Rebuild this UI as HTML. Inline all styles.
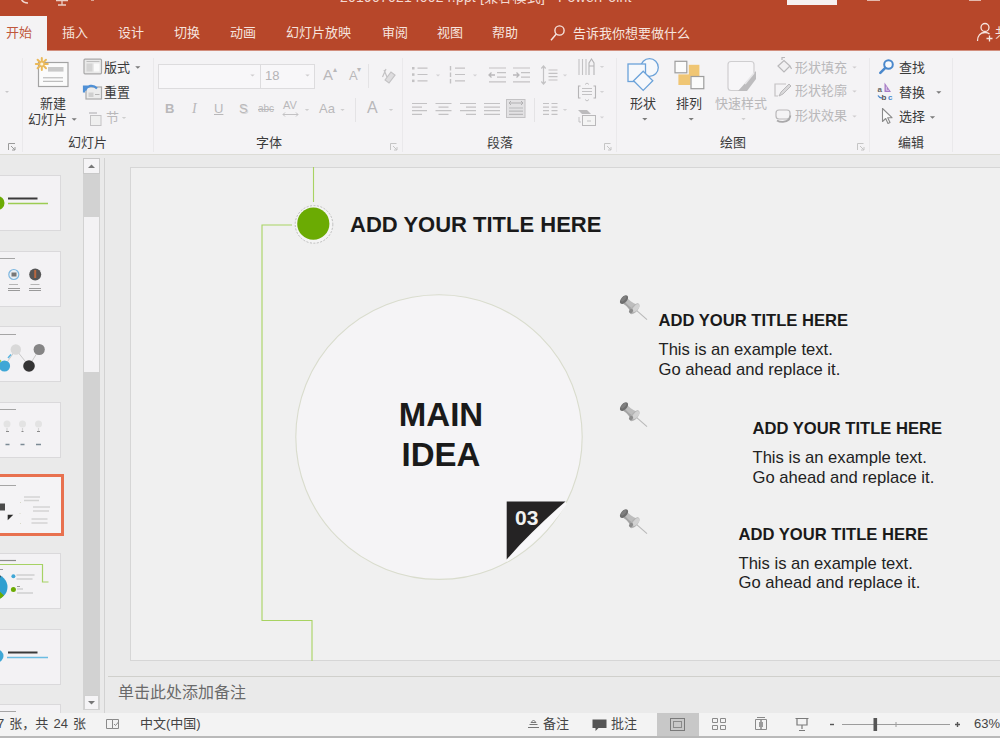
<!DOCTYPE html>
<html lang="zh-CN">
<head>
<meta charset="utf-8">
<title>PowerPoint</title>
<style>
*{box-sizing:border-box;margin:0;padding:0}
html,body{width:1000px;height:738px;overflow:hidden;background:#e6e6e6}
body{position:relative;font-family:"Liberation Sans","Noto Sans CJK SC",sans-serif;font-size:13px;color:#333}
.abs{position:absolute}
#titlebar{position:absolute;left:0;top:0;width:1000px;height:50px;background:#b7472a;overflow:hidden}
#titletext{position:absolute;left:340px;top:-14px;font-size:14px;color:#f3d9d2;white-space:nowrap;letter-spacing:.2px}
.tab{position:absolute;top:23px;height:20px;line-height:20px;color:#f6e4df;font-size:13px;white-space:nowrap}
#tab-home{position:absolute;left:0;top:16px;width:47px;height:34px;background:#f4f3f5}
#tab-home span{position:absolute;left:6px;top:7px;line-height:20px;color:#c0573c;font-size:13px}
#ribbon{position:absolute;left:0;top:50px;width:1000px;height:105px;background:#f4f3f5;border-bottom:1px solid #dcdcd6;overflow:hidden}
#ribbon:before{content:"";position:absolute;left:47px;top:0;width:953px;height:1px;background:#d28f7e}
.gsep{position:absolute;top:8px;width:1px;height:94px;background:#eae9eb}
.glabel{position:absolute;top:84px;font-size:13px;line-height:18px;color:#3b3b3b;white-space:nowrap}
.rt{position:absolute;font-size:13px;line-height:16px;color:#3a3a3a;white-space:nowrap}
.dim{color:#b9b8ba}
.arrow{position:absolute;width:0;height:0;border-left:3px solid transparent;border-right:3px solid transparent;border-top:3px solid #777}
.arrow.l{border-top-color:#c4c3c5}
#work{position:absolute;left:0;top:155px;width:1000px;height:558px;background:#eaeaea;overflow:hidden}
#slide{position:absolute;left:130px;top:12px;width:900px;height:494px;background:#f0f0f0;border:1px solid #d6d6d6}
#status{position:absolute;left:0;top:713px;width:1000px;height:25px;background:#f3f3f3;border-bottom:2px solid #b9b9b9;overflow:hidden}
.st{position:absolute;top:3px;font-size:13px;line-height:16px;color:#444;white-space:nowrap}
.thumb{position:absolute;left:-20px;width:81px;height:56px;background:#f3f2f4;border:1px solid #dad9db;overflow:hidden}
.stx{position:absolute;font-family:"Liberation Sans",sans-serif;color:#1a1a1a;white-space:nowrap}
.tt{font-size:16.6px;line-height:20px;font-weight:bold}
.tb{font-size:16.6px;line-height:19.7px;color:#222}
</style>
</head>
<body>

<!-- TITLE BAR + TABS -->
<div id="titlebar">
  <div id="titletext">20190702140024.ppt [兼容模式] - PowerPoint</div>
  <div class="abs" style="left:787px;top:-12px;width:50px;height:17px;background:#f6f1f0;color:#b7472a;font-size:12px;text-align:center;line-height:13px">登录</div>
  <svg class="abs" style="left:0;top:0" width="1000" height="50" fill="none">
    <path d="M21 -2c1 4 3.500 5 7 5" stroke="#f0d5cd" stroke-width="1.500"/>
    <path d="M56 0.500h12M62 0.500v4M58 5h8" stroke="#eccfc6" stroke-width="1.300"/>
    <path d="M91 0.300h3" stroke="#e3b9ad" stroke-width="1"/>
    <path d="M867 0.500h13M969 0.500h12" stroke="#e3b9ad" stroke-width="1.200"/>
    <circle cx="559.500" cy="30.500" r="4.600" stroke="#f6e4df" stroke-width="1.400"/><path d="M556.300 34l-5.300 6.200" stroke="#f6e4df" stroke-width="1.500"/>
    <circle cx="985" cy="27.500" r="4" stroke="#f6e4df" stroke-width="1.300"/><path d="M977.500 41c0-5.500 3-8.500 7.500-8.500 2 0 3.500 .500 4.500 1.500M986.500 38.500h6M989.500 35.500v6" stroke="#f6e4df" stroke-width="1.300"/>
  </svg>
  <div id="tab-home"><span>开始</span></div>
  <div class="tab" style="left:62px">插入</div>
  <div class="tab" style="left:118px">设计</div>
  <div class="tab" style="left:174px">切换</div>
  <div class="tab" style="left:230px">动画</div>
  <div class="tab" style="left:286px">幻灯片放映</div>
  <div class="tab" style="left:382px">审阅</div>
  <div class="tab" style="left:437px">视图</div>
  <div class="tab" style="left:492px">帮助</div>
  <div class="tab" style="left:573px;top:24px">告诉我你想要做什么</div>
  <div class="tab" style="left:995px">共</div>
</div>

<!-- RIBBON -->
<div id="ribbon">
  <div class="gsep" style="left:22px"></div>
  <div class="gsep" style="left:153px"></div>
  <div class="gsep" style="left:402px"></div>
  <div class="gsep" style="left:616px"></div>
  <div class="gsep" style="left:869px"></div>
  <div class="gsep" style="left:952px"></div>

  <!-- slides group text -->
  <div class="rt" style="left:40px;top:46px">新建</div>
  <div class="rt" style="left:28px;top:62px">幻灯片</div>
  <div class="rt" style="left:104px;top:10px">版式</div>
  <div class="rt" style="left:104px;top:35px">重置</div>
  <div class="rt dim" style="left:106px;top:60px">节</div>
  <div class="glabel" style="left:68px">幻灯片</div>

  <!-- font group -->
  <div class="abs" style="left:158px;top:14px;width:103px;height:25px;background:#f8f7f9;border:1px solid #dddcde"></div>
  <div class="abs" style="left:260px;top:14px;width:55px;height:25px;background:#f8f7f9;border:1px solid #dddcde"></div>
  <div class="rt dim" style="left:265px;top:18px;font-size:13px;color:#b5b4b6">18</div>
  <div class="rt dim" style="left:323px;top:17px;font-size:15px">A</div>
  <div class="rt dim" style="left:333px;top:12px;font-size:8px">▴</div>
  <div class="rt dim" style="left:349px;top:18px;font-size:13px">A</div>
  <div class="rt dim" style="left:357px;top:12px;font-size:8px">▾</div>
  <div class="rt dim" style="left:165px;top:51px;font-weight:bold">B</div>
  <div class="rt dim" style="left:192px;top:51px;font-style:italic;font-family:'Liberation Serif',serif;font-size:14px">I</div>
  <div class="rt dim" style="left:214px;top:51px;text-decoration:underline">U</div>
  <div class="rt dim" style="left:239px;top:51px;text-shadow:1px 1px 0 #d8d8d8">S</div>
  <div class="rt dim" style="left:258px;top:51px;font-size:10px;text-decoration:line-through">abc</div>
  <div class="rt dim" style="left:283px;top:47px;font-size:11px">AV</div>
  <div class="rt dim" style="left:319px;top:51px;font-size:13px">Aa</div>
  <div class="rt dim" style="left:367px;top:50px;font-size:16px">A</div>
  <div class="glabel" style="left:256px">字体</div>

  <!-- paragraph -->
  <div class="glabel" style="left:487px">段落</div>

  <!-- drawing -->
  <div class="rt" style="left:630px;top:46px">形状</div>
  <div class="rt" style="left:676px;top:46px">排列</div>
  <div class="rt dim" style="left:715px;top:46px">快速样式</div>
  <div class="rt dim" style="left:795px;top:10px">形状填充</div>
  <div class="rt dim" style="left:795px;top:33px">形状轮廓</div>
  <div class="rt dim" style="left:795px;top:58px">形状效果</div>
  <div class="glabel" style="left:720px">绘图</div>

  <!-- editing -->
  <div class="rt" style="left:899px;top:10px">查找</div>
  <div class="rt" style="left:899px;top:35px">替换</div>
  <div class="rt" style="left:899px;top:59px">选择</div>
  <div class="glabel" style="left:898px">编辑</div>

  <svg class="abs" style="left:0;top:0" width="1000" height="105" viewBox="0 50 1000 105" fill="none">
    <path d="M5 91.0h4l-2 2z" fill="#c8c7c9"/>
    <path d="M8.5 150v-6.5h6.5M11 146l4 4m0-3v3h-3" stroke="#9a9a9a" stroke-width="1"/>
    <rect x="38.5" y="62.5" width="29.5" height="24" fill="#fbfbfb" stroke="#a3a3a3" stroke-width="1.2"/>
    <rect x="48" y="67" width="15.5" height="4.6" fill="#c9c9c9"/>
    <path d="M43 77.8h20M43 81.3h20" stroke="#b0b0b0" stroke-width="1"/>
    <g stroke="#eab95a" stroke-width="2" stroke-linecap="round"><path d="M41.8 58v12M35.8 64h12M37.6 59.8l8.4 8.4M46 59.8l-8.4 8.4"/></g><circle cx="41.8" cy="64" r="1.6" fill="#fbf3df"/>
    <path d="M71.60000000000001 118.2h5.2l-2.6 2.6z" fill="#7a7a7a"/>
    <rect x="84" y="59.2" width="17.5" height="14.6" rx="1" fill="#e9e9e9" stroke="#a8a8a8" stroke-width="1.2"/><rect x="86.5" y="63.5" width="6" height="8" fill="#d4d4d4"/><rect x="94" y="63.5" width="5.5" height="8" fill="#fafafa"/><path d="M86.5 61.5h13" stroke="#bdbdbd"/>
    <path d="M135.20000000000002 66.2h5.2l-2.6 2.6z" fill="#7a7a7a"/>
    <rect x="86" y="87" width="15.5" height="12" fill="#ececec" stroke="#aaaaaa" stroke-width="1.2"/><rect x="88.5" y="92.5" width="5" height="4.5" fill="#cfcfcf"/><path d="M95 94.5h4.5" stroke="#b5b5b5"/><path d="M84 92.5v-6h5.5M85 90.5c2-5 8-6.5 12-2" stroke="#4f90d6" stroke-width="2.2" fill="none"/>
    <rect x="90.5" y="115.5" width="10.5" height="10" fill="#efefef" stroke="#c3c2c4"/><path d="M89 113h8" stroke="#c3c2c4" stroke-width="1.5"/>
    <path d="M121.8 116.9h4.4l-2.2 2.2z" fill="#cfcfcf"/>
    <path d="M250.3 74.4h4.4l-2.2 2.2z" fill="#cfcecf"/>
    <path d="M305.3 74.4h4.4l-2.2 2.2z" fill="#cfcecf"/>
    <path d="M304.8 108.9h4.4l-2.2 2.2z" fill="#cfcecf"/>
    <path d="M340.3 108.9h4.4l-2.2 2.2z" fill="#cfcecf"/>
    <path d="M388.8 108.9h4.4l-2.2 2.2z" fill="#cfcecf"/>
    <path d="M368.5 64v24M355.5 98v24M534.5 98v24" stroke="#e4e3e5"/>
    <path d="M283 114.5h15M285 112.5l-2 2 2 2M296 112.5l2 2-2 2" stroke="#c3c2c4" stroke-width="1"/>
    <g stroke="#c3c2c4" stroke-width="1.2"><path d="M384 70l3 7M386 69l-3.5 8"/><path d="M385 80l6-8 4 3-6 8z" fill="#dddcde"/></g>
    <path d="M390.5 150v-6.5h6M393 146l4 4m0-3v3h-3" stroke="#c5c5c5" stroke-width="1"/>
    <g fill="#c3c2c4"><rect x="412" y="67" width="2.5" height="2.5"/><rect x="412" y="73.300" width="2.5" height="2.5"/><rect x="412" y="79.600" width="2.5" height="2.5"/></g><path d="M417.5 68.2h10M417.5 74.500h10M417.5 80.800h10" stroke="#c3c2c4" stroke-width="1.2"/>
    <path d="M435.8 74.4h4.4l-2.2 2.2z" fill="#d4d3d5"/>
    <path d="M450.5 66v4.500M450.5 72.500v4.500M450.5 79v4.500" stroke="#c3c2c4" stroke-width="1.4"/><path d="M455 68.2h10M455 74.500h10M455 80.800h10" stroke="#c3c2c4" stroke-width="1.2"/>
    <path d="M472.8 74.4h4.4l-2.2 2.2z" fill="#d4d3d5"/>
    <path d="M489 68h17M497 72.600h9M497 77.200h9M489 81.800h17" stroke="#c3c2c4" stroke-width="1.2"/><path d="M495 75h-6m2.5-2.5l-2.5 2.5 2.5 2.5" stroke="#b9b8ba" stroke-width="1.3"/>
    <path d="M513 68h17M521 72.600h9M521 77.200h9M513 81.800h17" stroke="#c3c2c4" stroke-width="1.2"/><path d="M513 75h6m-2.5-2.5l2.5 2.5-2.5 2.5" stroke="#b9b8ba" stroke-width="1.3"/>
    <path d="M543.5 66v18m-2.2-15.500l2.2-2.5 2.2 2.5m-4.400 13l2.2 2.500 2.2-2.500" stroke="#c3c2c4" stroke-width="1.2"/><path d="M548.5 70h9M548.5 73.300h9M548.5 76.600h9M548.5 80h9" stroke="#c3c2c4" stroke-width="1.2"/>
    <path d="M562.8 74.4h4.4l-2.2 2.2z" fill="#d4d3d5"/>
    <path d="M579 59v16M582.500 59v16M586 59v16" stroke="#c3c2c4" stroke-width="1.1"/><path d="M589 75v-12l2.500-4 2.500 4v12M589 66h5" stroke="#b5b4b6" stroke-width="1.1"/>
    <path d="M599.8 65.9h4.4l-2.2 2.2z" fill="#d4d3d5"/>
    <path d="M580.500 86h-2v12h2M593.500 86h2v12h-2" stroke="#b5b4b6" stroke-width="1.1"/><path d="M582 88.5h10M582 91.5h10M582 94.5h10" stroke="#c3c2c4" stroke-width="1.2"/><path d="M585 84.500l2-1.500 2 1.500M585 99.500l2 1.500 2-1.500" stroke="#c3c2c4"/>
    <path d="M599.8 90.9h4.4l-2.2 2.2z" fill="#d4d3d5"/>
    <path d="M578 110h9l4 4h-9z" fill="#bcbbbd"/><rect x="582.500" y="115.500" width="13" height="10" fill="#f4f4f4" stroke="#b9b8ba"/><path d="M579 117v5h2" stroke="#c3c2c4"/><path d="M587 121h4" stroke="#c3c2c4"/>
    <path d="M599.8 116.4h4.4l-2.2 2.2z" fill="#d4d3d5"/>
    <path d="M412 103.5h15M412 107.1h10M412 110.7h15M412 114.3h10" stroke="#c3c2c4" stroke-width="1.2"/>
    <path d="M435.5 103.5h16M438.5 107.1h10M435.5 110.7h16M438.5 114.3h10" stroke="#c3c2c4" stroke-width="1.2"/>
    <path d="M460 103.5h16M466 107.1h10M460 110.7h16M466 114.3h10" stroke="#c3c2c4" stroke-width="1.2"/>
    <path d="M484 103.5h16M484 107.1h16M484 110.7h16M484 114.3h16" stroke="#c3c2c4" stroke-width="1.2"/>
    <rect x="506.500" y="99.500" width="18.500" height="18" fill="#e3e2e4" stroke="#c3c2c4"/><path d="M509 103h14M511 101l-2 2 2 2M521 101l2 2-2 2" stroke="#b0afb1"/><path d="M509 108.0h14M509 111.2h14M509 114.4h14" stroke="#bab9bb" stroke-width="1.2"/>
    <path d="M543 103.5h6M543 107.1h6M543 110.7h6M543 114.3h6" stroke="#c3c2c4" stroke-width="1.2"/><path d="M551.5 103.5h6M551.5 107.1h6M551.5 110.7h6M551.5 114.3h6" stroke="#c3c2c4" stroke-width="1.2"/>
    <path d="M562.8 108.9h4.4l-2.2 2.2z" fill="#d4d3d5"/>
    <path d="M604.500 150v-6.500h6M607 146l4 4m0-3v3h-3" stroke="#c5c5c5" stroke-width="1"/>
    <g stroke="#6ba2d9" stroke-width="1.3" fill="#f6f8fb"><circle cx="649.500" cy="67.500" r="8.800"/><rect x="628" y="64" width="17.500" height="17.500"/><path d="M643.200 71.200l9.600 9.600-9.600 9.600-9.600-9.600z"/></g>
    <path d="M642.1999999999999 117.9h5.2l-2.6 2.6z" fill="#7a7a7a"/>
    <rect x="688.800" y="64.800" width="10.600" height="11.400" fill="#f0c674"/><rect x="678.400" y="74.400" width="12" height="10.600" fill="#f0c674"/><rect x="675" y="61.300" width="11.800" height="11.500" fill="#fbfbfb" stroke="#9d9d9d" stroke-width="1.200"/><rect x="691" y="76.500" width="12.800" height="12.200" fill="#fbfbfb" stroke="#9d9d9d" stroke-width="1.200"/>
    <path d="M688.6 117.9h5.2l-2.6 2.6z" fill="#7a7a7a"/>
    <path d="M731 61.500h20a3 3 0 0 1 3 3v12l-14 14h-9a3 3 0 0 1-3-3v-23a3 3 0 0 1 3-3z" fill="#f7f6f8" stroke="#cfced0" stroke-width="1.200"/><path d="M738 91l18-20v8l-9 12z" fill="#bdbcbe"/><path d="M745 84l9-11" stroke="#e8e7e9" stroke-width="1.500"/>
    <path d="M741.3 118.10000000000001h4.4l-2.2 2.2z" fill="#cfcecf"/>
    <path d="M778 66l6-5.500 6 5.500-6 6zM782 60v-2.500h3M790 66l1.500 3" stroke="#b9b8ba" stroke-width="1.200" fill="#f1f0f2"/>
    <path d="M786 84h-11v12h3" stroke="#c3c2c4" stroke-width="1.200"/><path d="M779 96l2-4 8-8 2 2-8 8z" fill="#d9d8da" stroke="#b9b8ba" stroke-width="1"/>
    <path d="M776 113a3 3 0 0 1 3-3h8a3 3 0 0 1 3 3v3a3 3 0 0 1-3 3h-8a3 3 0 0 1-3-3z" fill="#f4f3f5" stroke="#b9b8ba" stroke-width="1.200"/><path d="M777 120.500c3 2 9 2 12-1l1.500-4" stroke="#a9a8aa" stroke-width="1.800"/>
    <path d="M852.3 66.4h4.4l-2.2 2.2z" fill="#cfcecf"/>
    <path d="M852.3 90.4h4.4l-2.2 2.2z" fill="#cfcecf"/>
    <path d="M852.3 115.4h4.4l-2.2 2.2z" fill="#cfcecf"/>
    <path d="M857.500 150v-6.500h6M860 146l4 4m0-3v3h-3" stroke="#c5c5c5" stroke-width="1"/>
    <circle cx="888.500" cy="64.500" r="4.300" stroke="#4a88cc" stroke-width="2" fill="#f7f9fc"/><path d="M885.300 67.800l-5 5" stroke="#4a88cc" stroke-width="2.600" stroke-linecap="round"/>
    <path d="M884.500 82.500v9.500h6.500z" fill="#a77cc6"/><path d="M886.300 86.500v3.800h2.600" stroke="#eadff3" stroke-width=".8"/><text x="877.500" y="91.500" font-family="Liberation Sans, sans-serif" font-size="8" font-weight="bold" fill="#666">a</text><text x="881.500" y="99.500" font-family="Liberation Sans, sans-serif" font-size="8" font-weight="bold" fill="#555">b</text><text x="888" y="99.500" font-family="Liberation Sans, sans-serif" font-size="8" font-weight="bold" fill="#4a88cc">c</text><path d="M878 95.500c1 2 2.500 2.500 4 2.500" stroke="#4a88cc" stroke-width="1.300"/>
    <path d="M936.1999999999999 91.2h5.2l-2.6 2.6z" fill="#7a7a7a"/>
    <path d="M882.500 108.500v13l3.200-3 2.300 5 2-1-2.300-4.800h4.300z" fill="#fbfbfb" stroke="#8a8a8a" stroke-width="1.100" stroke-linejoin="round"/>
    <path d="M929.9 116.2h5.2l-2.6 2.6z" fill="#7a7a7a"/>
  </svg>
</div>

<!-- WORK AREA -->
<div id="work">
  <!-- thumbnails -->
  <div class="thumb" style="top:20px"><!--T1--></div>
  <div class="thumb" style="top:96px"><!--T2--></div>
  <div class="thumb" style="top:171px"><!--T3--></div>
  <div class="thumb" style="top:247px"><!--T4--></div>
  <div class="thumb" style="top:319px;left:-20px;width:84px;height:62px;border:3px solid #e8714f;background:#f4f3f5"><!--T5--></div>
  <div class="thumb" style="top:398px"><!--T6--></div>
  <div class="thumb" style="top:474px"><!--T7--></div>
  <div class="thumb" style="top:549px"><!--T8--></div>
  <svg class="abs" style="left:0;top:0" width="66" height="558" viewBox="0 155 66 558" fill="none">
    <!-- t1 -->
    <circle cx="-2.500" cy="203" r="7" fill="#6bab03"/>
    <path d="M8 198.500h29.500" stroke="#3a3a3a" stroke-width="2"/><path d="M8 203.500h40" stroke="#9ccc52" stroke-width="1.300"/>
    <!-- t2 -->
    <path d="M0 258.500h15" stroke="#a5a5a5" stroke-width="1"/>
    <circle cx="13.800" cy="274.500" r="5" fill="#e9eef3" stroke="#7db7e0" stroke-width="1.200"/><rect x="11.500" y="272.500" width="5" height="4" fill="#777"/>
    <circle cx="35.200" cy="274.500" r="6" fill="#555"/><path d="M35.200 270v8" stroke="#b9673f" stroke-width="2"/>
    <path d="M9 284.500h9M30.500 284.500h9" stroke="#b5b5b5" stroke-width="1"/><path d="M8 288.500h12M8 290.500h12M29 288.500h12M29 290.500h12" stroke="#9a9a9a" stroke-width="1.200"/>
    <!-- t3 -->
    <path d="M0 334.500h16" stroke="#a5a5a5" stroke-width="1"/>
    <path d="M4.500 366l11.300-16.500M29 366l10.200-16.500M15.800 349.500l13.200 16.500" stroke="#c9c9c9" stroke-width="1"/>
    <circle cx="15.800" cy="349.500" r="5.200" fill="#d9d9d9"/><circle cx="39.200" cy="349.500" r="5.600" fill="#858585"/>
    <circle cx="4.500" cy="366" r="5.600" fill="#3fa7d6"/><circle cx="29" cy="366" r="5.800" fill="#343434"/>
    <path d="M8 358l3-3.500" stroke="#5bb5e0" stroke-width="1.500"/><circle cx="0" cy="361" r="1.300" fill="#9ccc52"/>
    <!-- t4 -->
    <path d="M0 409.500h16" stroke="#a5a5a5" stroke-width="1"/>
    <g fill="#e3e3e3"><circle cx="7" cy="424" r="3.500"/><circle cx="22.500" cy="424" r="3.500"/><circle cx="38.500" cy="424" r="3.500"/></g>
    <path d="M7 428v4M22.500 428v4M38.500 428v4" stroke="#d5d5d5" stroke-width="1.200"/>
    <path d="M6 431.500h3M21.500 431.500h2M37 431.500h3" stroke="#8a8a8a" stroke-width="1"/>
    <path d="M5.500 444.500h4M20.500 444.500h4M36 444.500h5" stroke="#7b8a94" stroke-width="1.600"/>
    <!-- t5 selected -->
    <path d="M0 485.500h16" stroke="#a5a5a5" stroke-width="1"/>
    <path d="M0 503.500h5v7h-5z" fill="#4a4a4a"/><path d="M7.700 514.700h5.600l-5.600 5.500z" fill="#2a2a2a"/>
    <path d="M20 503l1-1M19.500 514l1-1M20 524l1-1" stroke="#d9d9c9" stroke-width="1"/>
    <path d="M24 497h16M33 507h17M31.500 519h16" stroke="#c4c4c4" stroke-width="1"/><path d="M24 500.500h15M33 511h16M31.500 523h16" stroke="#d3d3d3" stroke-width="1.600"/>
    <!-- t6 -->
    <path d="M0 560.500h16" stroke="#8a8a8a" stroke-width="1.200"/>
    <path d="M0 564.500h42.500v17.500h6" stroke="#a6d264" stroke-width="1.200"/>
    <circle cx="-5" cy="587" r="12.500" fill="#2f9fd0"/><path d="M-5 587l-3-12.500a12.500 12.500 0 0 1 9 1.500z" fill="#3a3a3a"/><path d="M-5 587l9 8.500a12.500 12.500 0 0 1-12 4z" fill="#6bab03"/>
    <path d="M0 569.500h3" stroke="#999" stroke-width="1"/>
    <circle cx="13.400" cy="576.300" r="2" fill="#3fa7d6"/><path d="M16.500 575h18M16.500 579h16" stroke="#bdbdbd" stroke-width="1.200"/>
    <circle cx="13.400" cy="589.500" r="2.500" fill="#6bab03"/><path d="M17 586.500h3" stroke="#999"/><path d="M17 589h6M17 593h16" stroke="#bdbdbd" stroke-width="1.200"/>
    <!-- t7 -->
    <circle cx="-3" cy="656" r="6.500" fill="#3fa7d6"/>
    <path d="M8 652.500h29.500" stroke="#3a3a3a" stroke-width="2"/><path d="M7 657.500h41" stroke="#6bbde2" stroke-width="1.300"/>
    <!-- t8 -->
    <path d="M0 711.500h16" stroke="#a5a5a5" stroke-width="1"/>
  </svg>
  <!-- scrollbar -->
  <div class="abs" style="left:83px;top:3px;width:17px;height:552px;background:#d2d2d2"></div>
  <div class="abs" style="left:83px;top:3px;width:17px;height:16px;background:#f5f4f6;border:1px solid #c9c9c9"></div>
  <div class="abs" style="left:84px;top:62px;width:15px;height:155px;background:#f3f2f4"></div>
  <div class="abs" style="left:84px;top:540px;width:15px;height:15px;background:#f5f4f6;border:1px solid #d0d0d0"></div>
  <svg class="abs" style="left:83px;top:3px" width="17" height="552" fill="none"><path d="M5 10l3.500-3.500 3.500 3.500z" fill="#777"/><path d="M5 543l3.500 3.500 3.500-3.500z" fill="#777"/></svg>
  <div class="abs" style="left:104px;top:3px;width:1px;height:555px;background:#d2d2d2"></div>
  <!-- slide -->
  <div id="slide">
    <svg class="abs" style="left:-1px;top:-1px" width="870" height="494" viewBox="130 167 870 494" fill="none">
      <g stroke="#a8d362" stroke-width="1.100">
        <path d="M313.500 167v35"/>
        <path d="M292 225h-30v395.500h50v40.500"/>
      </g>
      <circle cx="314" cy="224.400" r="18.800" fill="#f4f4f4" stroke="#bdbdbd" stroke-width="1" stroke-dasharray="2 1.500"/>
      <circle cx="313.300" cy="223.700" r="16.100" fill="#6bab03"/>
      <ellipse cx="439" cy="437.100" rx="143.200" ry="142.300" fill="#f5f4f6" stroke="#d9dccd" stroke-width="1.100"/>
      <path d="M565.500 501.500L506.700 559.400l0 2.500c22-13 47-37 60-58z" fill="#f8f7f9"/>
      <path d="M506.700 501.500h58.800c-21 17.900-40.600 37.200-58.800 57.900z" fill="#252324"/>
      <g transform="translate(624 299.6) rotate(41)">
      <path d="M15 0h15.500" stroke="#b9b9b9" stroke-width="1.100"/>
      <path d="M0 -3.600c4 .600 8 .600 13 -1v9.200c-5 -1.600 -9 -1.600 -13 -1z" fill="#bdbdbd"/>
      <path d="M2 1c4 .600 8 .600 11 0v3.600c-5 -1.600 -8 -1.600 -11 -1z" fill="#a4a4a4"/>
      <ellipse cx="0" cy="0" rx="3" ry="5.200" fill="#6e6e6e"/>
      <ellipse cx="-.800" cy="-.500" rx="1.600" ry="3.400" fill="#7f7f7f"/>
      <ellipse cx="14" cy="0" rx="3.200" ry="6.600" fill="#b3b3b3"/>
      <ellipse cx="14.600" cy="-1.500" rx="2.400" ry="4.600" fill="#d2d2d2"/>
      <ellipse cx="12.800" cy="4" rx="1.800" ry="2.400" fill="#8c8c8c"/>
    </g>
      <g transform="translate(624 406.6) rotate(41)">
      <path d="M15 0h15.500" stroke="#b9b9b9" stroke-width="1.100"/>
      <path d="M0 -3.600c4 .600 8 .600 13 -1v9.200c-5 -1.600 -9 -1.600 -13 -1z" fill="#bdbdbd"/>
      <path d="M2 1c4 .600 8 .600 11 0v3.600c-5 -1.600 -8 -1.600 -11 -1z" fill="#a4a4a4"/>
      <ellipse cx="0" cy="0" rx="3" ry="5.200" fill="#6e6e6e"/>
      <ellipse cx="-.800" cy="-.500" rx="1.600" ry="3.400" fill="#7f7f7f"/>
      <ellipse cx="14" cy="0" rx="3.200" ry="6.600" fill="#b3b3b3"/>
      <ellipse cx="14.600" cy="-1.500" rx="2.400" ry="4.600" fill="#d2d2d2"/>
      <ellipse cx="12.800" cy="4" rx="1.800" ry="2.400" fill="#8c8c8c"/>
    </g>
      <g transform="translate(624 513.6) rotate(41)">
      <path d="M15 0h15.500" stroke="#b9b9b9" stroke-width="1.100"/>
      <path d="M0 -3.600c4 .600 8 .600 13 -1v9.200c-5 -1.600 -9 -1.600 -13 -1z" fill="#bdbdbd"/>
      <path d="M2 1c4 .600 8 .600 11 0v3.600c-5 -1.600 -8 -1.600 -11 -1z" fill="#a4a4a4"/>
      <ellipse cx="0" cy="0" rx="3" ry="5.200" fill="#6e6e6e"/>
      <ellipse cx="-.800" cy="-.500" rx="1.600" ry="3.400" fill="#7f7f7f"/>
      <ellipse cx="14" cy="0" rx="3.200" ry="6.600" fill="#b3b3b3"/>
      <ellipse cx="14.600" cy="-1.500" rx="2.400" ry="4.600" fill="#d2d2d2"/>
      <ellipse cx="12.800" cy="4" rx="1.800" ry="2.400" fill="#8c8c8c"/>
    </g>
    </svg>
    <div class="stx" style="left:219px;top:44px;font-size:22px;line-height:26px;font-weight:bold">ADD YOUR TITLE HERE</div>
    <div class="stx" style="left:130px;top:227px;width:360px;text-align:center;font-size:33px;line-height:39.7px;font-weight:bold">MAIN<br>IDEA</div>
    <div class="stx" style="left:384px;top:338px;font-size:21px;line-height:24px;font-weight:bold;color:#f1f1f1">03</div>

    <div class="stx tt" style="left:527.5px;top:142.5px">ADD YOUR TITLE HERE</div>
    <div class="stx tb" style="left:527.5px;top:172px">This is an example text.<br>Go ahead and replace it.</div>

    <div class="stx tt" style="left:621.5px;top:250.5px">ADD YOUR TITLE HERE</div>
    <div class="stx tb" style="left:621.5px;top:280px">This is an example text.<br>Go ahead and replace it.</div>

    <div class="stx tt" style="left:607.5px;top:356.6px">ADD YOUR TITLE HERE</div>
    <div class="stx tb" style="left:607.5px;top:385.6px">This is an example text.<br>Go ahead and replace it.</div>
</div>
  <!-- notes -->
  <div class="abs" style="left:108px;top:521px;width:892px;height:1px;background:#d0d0cc"></div>
  <div class="abs" style="left:118px;top:527px;font-size:16px;line-height:22px;color:#6a6a6a;white-space:nowrap">单击此处添加备注</div>
</div>

<!-- STATUS BAR -->
<div id="status">
  <div class="st" style="left:-3px;word-spacing:1.5px">7 张，共 24 张</div>
  <div class="st" style="left:140px">中文(中国)</div>
  <div class="st" style="left:543px">备注</div>
  <div class="st" style="left:611px">批注</div>
  <div class="st" style="left:974px">63%</div>
  <div class="abs" style="left:657px;top:0;width:42px;height:24px;background:#c8c8c8"></div>
  <svg class="abs" style="left:0;top:0" width="1000" height="25" fill="none">
    <path d="M106.500 6.500h6v9h-6zM112.500 6.500h6v9h-6zM114 11l1.500 1.500 3-3.500" stroke="#8a8a8a" stroke-width="1"/>
    <path d="M528 14.500h11M529.500 11.500h8M533.500 7l2.500 2.500h-5z" stroke="#777" stroke-width="1"/>
    <path d="M592.500 6.500h14v8.500h-8l-3 3v-3h-3z" fill="#555"/>
    <rect x="670.500" y="5.500" width="14" height="12" stroke="#7a7a7a"/><rect x="673.500" y="8.500" width="8" height="6" stroke="#8a8a8a"/>
    <path d="M712.500 5.500h5v4h-5zM720.500 5.500h5v4h-5zM712.500 12.500h5v4h-5zM720.500 12.500h5v4h-5z" stroke="#8a8a8a"/>
    <path d="M755.500 6.500h5.500v10h-5.500zM761 6.500h5.500v10h-5.500zM757 4.500h8" stroke="#8a8a8a"/><path d="M759 9h4v5h-4z" fill="#9a9a9a"/>
    <path d="M795.500 5.500h13M797 6v6h10v-6M802 12v4M799 17.500h6" stroke="#7a7a7a" stroke-width="1.200"/>
    <path d="M830 11.500h4" stroke="#555" stroke-width="1.400"/>
    <path d="M842 11.500h108" stroke="#9c9c9c" stroke-width="1"/>
    <path d="M896 9v5" stroke="#9c9c9c"/>
    <rect x="873.500" y="5" width="3.600" height="13" fill="#555"/>
    <path d="M955 11.500h5M957.500 9v5" stroke="#555" stroke-width="1.400"/>
  </svg>
</div>

</body>
</html>
